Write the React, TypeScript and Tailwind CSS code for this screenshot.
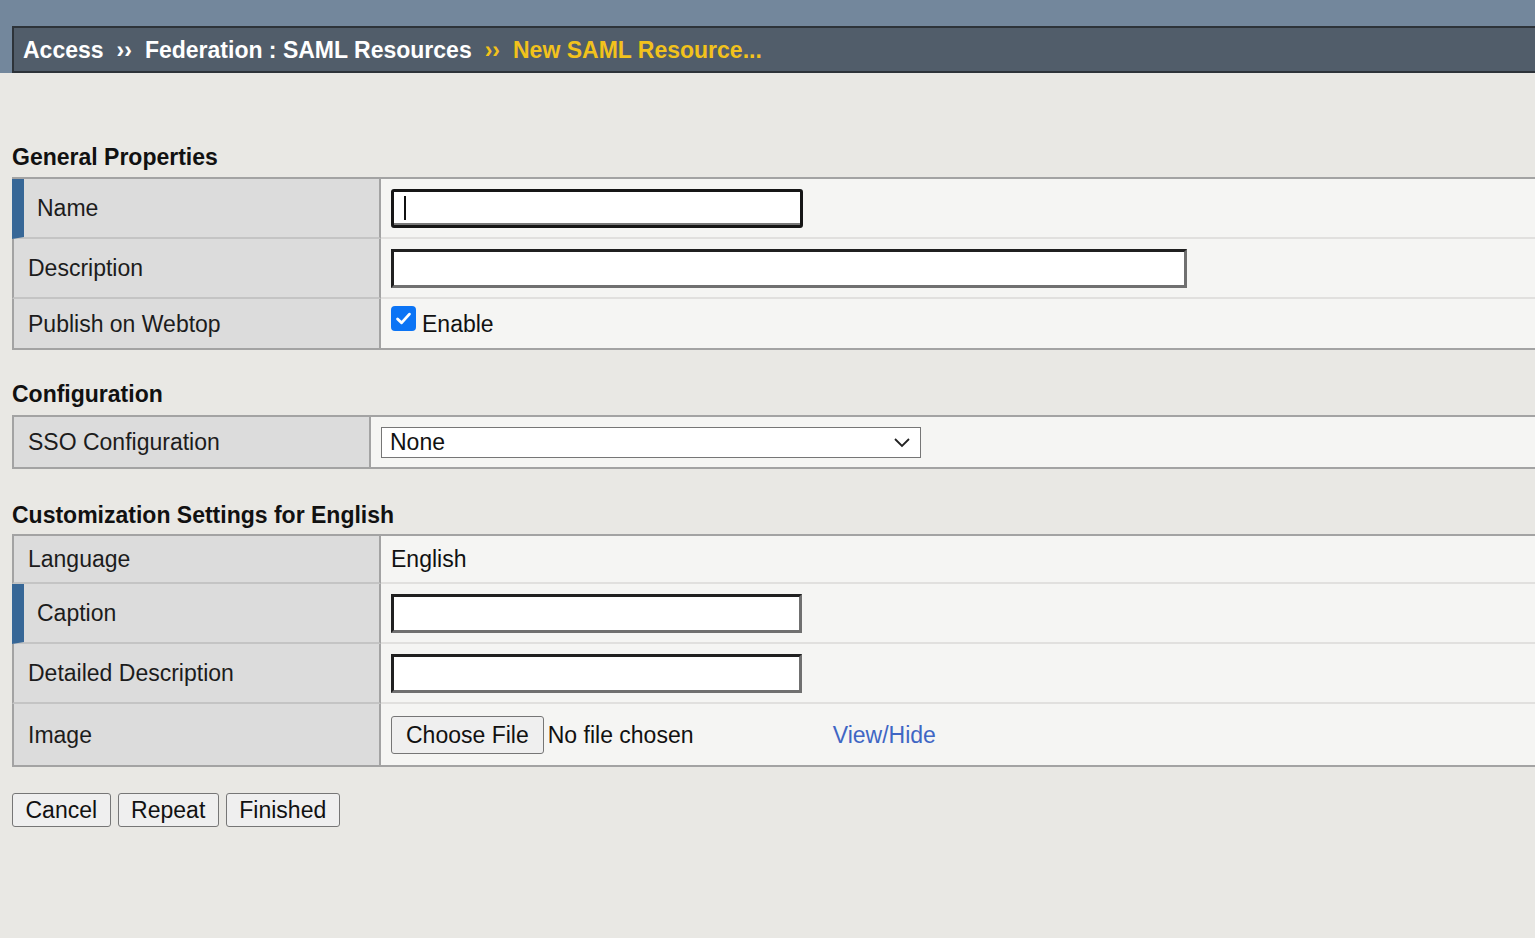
import React from 'react';

const font = { fontFamily: '"Liberation Sans", Arial, sans-serif' };

type RowProps = {
  label: string;
  required?: boolean;
  height: string;
  leftWidth: string;
  last?: boolean;
  children?: React.ReactNode;
};

function Row({ label, required, height, leftWidth, last, children }: RowProps) {
  const leftBorder = required
    ? 'border-l-[12px] border-l-[#376797] pl-[13px]'
    : 'border-l-2 border-l-[#a3a3a3] pl-[14px]';
  const bottomLeft = last ? '' : 'border-b-2 border-b-[#c4c4c4]';
  const bottomRight = last ? '' : 'border-b-2 border-b-[#e1e0de]';
  return (
    <div className={`flex ${height}`}>
      <div
        className={`${leftWidth} shrink-0 flex items-center bg-[#dcdcdc] border-r-2 border-r-[#a3a3a3] ${leftBorder} ${bottomLeft} text-[#1c1c1c]`}
      >
        {label}
      </div>
      <div className={`flex-1 flex items-center bg-[#f5f5f3] pl-[10px] ${bottomRight}`}>{children}</div>
    </div>
  );
}

function TextBox({ width, focused }: { width: string; focused?: boolean }) {
  if (focused) {
    return (
      <div
        className={`${width} h-[39px] bg-white rounded-[3px] border-[3px] border-[#161616] shadow-[inset_0_-2px_0_#7a7a7a] flex items-center pl-[10px]`}
      >
        <span className="w-[2px] h-[24px] bg-[#111]" />
      </div>
    );
  }
  return (
    <div
      className={`${width} h-[39px] bg-white border-[3px] border-t-[#202020] border-l-[#202020] border-b-[#707070] border-r-[#707070]`}
    />
  );
}

function Heading({ children, className }: { children: React.ReactNode; className: string }) {
  return <h2 className={`text-[23px] leading-[26px] font-bold text-[#111] ${className}`}>{children}</h2>;
}

function Table({ children }: { children: React.ReactNode }) {
  return <div className="border-t-2 border-b-2 border-[#a3a3a3]">{children}</div>;
}

export default function App() {
  return (
    <div className="min-h-screen bg-[#e9e8e4] text-[23px] leading-[26px]" style={font}>
      {/* Breadcrumb header */}
      <div className="bg-[#73879c] pt-[26px] pl-[12px]">
        <div className="h-[47px] bg-[#515d6a] border-y-2 border-l-2 border-[#2d3339] flex items-center pl-[9px] font-bold text-white whitespace-nowrap">
          <span>Access</span>
          <span className="mx-[13px]">››</span>
          <span>Federation : SAML Resources</span>
          <span className="mx-[13px] text-[#f2c21c]">››</span>
          <span className="text-[#f2c21c]">New SAML Resource...</span>
        </div>
      </div>

      <div className="pl-[12px]">
        {/* General Properties */}
        <Heading className="mt-[71px] mb-[7px]">General Properties</Heading>
        <Table>
          <Row label="Name" required height="h-[60px]" leftWidth="w-[369px]">
            <TextBox width="w-[412px]" focused />
          </Row>
          <Row label="Description" height="h-[60px]" leftWidth="w-[369px]">
            <TextBox width="w-[796px]" />
          </Row>
          <Row label="Publish on Webtop" height="h-[49px]" leftWidth="w-[369px]" last>
            <span className="w-[25px] h-[25px] mb-[10px] rounded-[4px] bg-[#0b74f5] flex items-center justify-center">
              <svg width="19" height="19" viewBox="0 0 24 24" fill="none">
                <path d="M4.5 12.5l5 5L19.5 6.5" stroke="white" strokeWidth="3.6" strokeLinecap="round" strokeLinejoin="round" />
              </svg>
            </span>
            <span className="ml-[6px] text-[#111]">Enable</span>
          </Row>
        </Table>

        {/* Configuration */}
        <Heading className="mt-[31px] mb-[8px]">Configuration</Heading>
        <Table>
          <Row label="SSO Configuration" height="h-[50px]" leftWidth="w-[359px]" last>
            <div className="w-[540px] h-[31px] bg-white border border-[#767676] flex items-center justify-between pl-[8px] pr-[9px] text-[#111]">
              <span>None</span>
              <svg width="18" height="12" viewBox="0 0 18 12" fill="none">
                <path d="M2 3l7 7 7-7" stroke="#222" strokeWidth="1.8" />
              </svg>
            </div>
          </Row>
        </Table>

        {/* Customization */}
        <Heading className="mt-[33px] mb-[6px]">Customization Settings for English</Heading>
        <Table>
          <Row label="Language" height="h-[48px]" leftWidth="w-[369px]">
            <span className="text-[#111]">English</span>
          </Row>
          <Row label="Caption" required height="h-[60px]" leftWidth="w-[369px]">
            <TextBox width="w-[411px]" />
          </Row>
          <Row label="Detailed Description" height="h-[60px]" leftWidth="w-[369px]">
            <TextBox width="w-[411px]" />
          </Row>
          <Row label="Image" height="h-[61px]" leftWidth="w-[369px]" last>
            <button className="h-[38px] px-[14px] border border-[#767676] rounded-[3px] bg-[#efefef] text-[#111]">
              Choose File
            </button>
            <span className="ml-[4px] w-[285px] text-[#111]">No file chosen</span>
            <a href="#" className="text-[#3f66c4]">
              View/Hide
            </a>
          </Row>
        </Table>

        {/* Actions */}
        <div className="flex gap-[7px] mt-[26px]">
          {['Cancel', 'Repeat', 'Finished'].map((b) => (
            <button
              key={b}
              className="h-[34px] px-[12.5px] border border-[#767676] rounded-[3px] bg-[#efefef] text-[#111]"
            >
              {b}
            </button>
          ))}
        </div>
      </div>
    </div>
  );
}
